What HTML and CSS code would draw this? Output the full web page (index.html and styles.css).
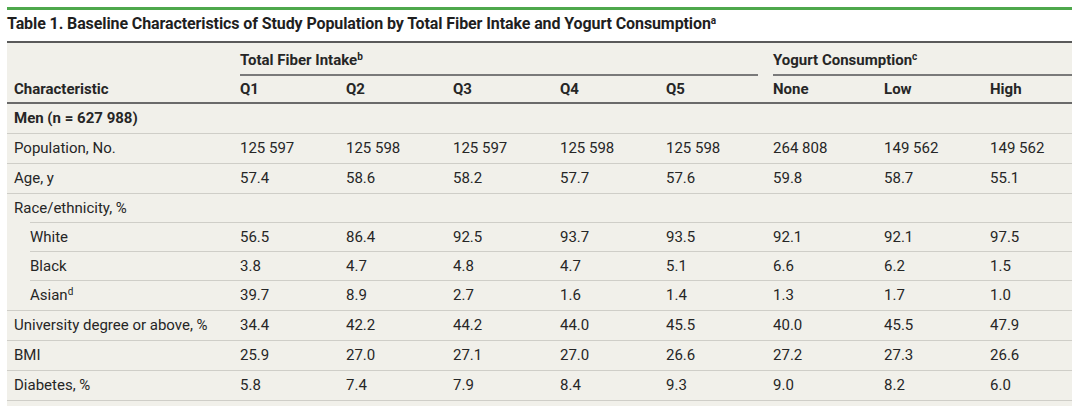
FILE: index.html
```html
<!DOCTYPE html>
<html lang="en">
<head>
<meta charset="utf-8">
<title>Table 1</title>
<link rel="stylesheet" href="styles.css">
</head>
<body>
<div class="wrap">
  <div class="topbar"></div>
  <div class="title">Table 1. Baseline Characteristics of Study Population by Total Fiber Intake and Yogurt Consumption<sup>a</sup></div>
  <table class="tbl">
    <colgroup>
      <col class="c0"><col class="c1"><col class="c2"><col class="c3"><col class="c4"><col class="c5"><col class="c6"><col class="c7"><col class="c8">
    </colgroup>
    <thead>
      <tr class="span-row">
        <th></th>
        <th colspan="5" class="spanner"><div class="span-label">Total Fiber Intake<sup>b</sup></div></th>
        <th colspan="3" class="spanner last"><div class="span-label">Yogurt Consumption<sup>c</sup></div></th>
      </tr>
      <tr class="col-row">
        <th>Characteristic</th>
        <th>Q1</th><th>Q2</th><th>Q3</th><th>Q4</th><th>Q5</th>
        <th>None</th><th>Low</th><th>High</th>
      </tr>
    </thead>
    <tbody>
      <tr class="group"><td colspan="9">Men (n = 627 988)</td></tr>
      <tr><td>Population, No.</td><td>125 597</td><td>125 598</td><td>125 597</td><td>125 598</td><td>125 598</td><td>264 808</td><td>149 562</td><td>149 562</td></tr>
      <tr><td>Age, y</td><td>57.4</td><td>58.6</td><td>58.2</td><td>57.7</td><td>57.6</td><td>59.8</td><td>58.7</td><td>55.1</td></tr>
      <tr class="parent"><td colspan="9">Race/ethnicity, %</td></tr>
      <tr class="sub"><td><span class="ind">White</span></td><td>56.5</td><td>86.4</td><td>92.5</td><td>93.7</td><td>93.5</td><td>92.1</td><td>92.1</td><td>97.5</td></tr>
      <tr class="sub"><td><span class="ind">Black</span></td><td>3.8</td><td>4.7</td><td>4.8</td><td>4.7</td><td>5.1</td><td>6.6</td><td>6.2</td><td>1.5</td></tr>
      <tr><td><span class="ind">Asian<sup>d</sup></span></td><td>39.7</td><td>8.9</td><td>2.7</td><td>1.6</td><td>1.4</td><td>1.3</td><td>1.7</td><td>1.0</td></tr>
      <tr><td>University degree or above, %</td><td>34.4</td><td>42.2</td><td>44.2</td><td>44.0</td><td>45.5</td><td>40.0</td><td>45.5</td><td>47.9</td></tr>
      <tr><td>BMI</td><td>25.9</td><td>27.0</td><td>27.1</td><td>27.0</td><td>26.6</td><td>27.2</td><td>27.3</td><td>26.6</td></tr>
      <tr><td>Diabetes, %</td><td>5.8</td><td>7.4</td><td>7.9</td><td>8.4</td><td>9.3</td><td>9.0</td><td>8.2</td><td>6.0</td></tr>
      <tr class="tail"><td colspan="9"></td></tr>
    </tbody>
  </table>
</div>
</body>
</html>
```
FILE: styles.css
```css
html, body {
  margin: 0;
  padding: 0;
  background: #ffffff;
}
body {
  font-family: Roboto, "Liberation Sans", sans-serif;
  color: #262626;
  height: 406px;
  overflow: hidden;
}
.wrap {
  margin: 7px 8px 0 7px;
}
.topbar {
  height: 3px;
  background: #4ea84c;
}
.title {
  font-weight: 700;
  font-size: 16px;
  line-height: 20px;
  padding: 4px 0 7px 0;
  letter-spacing: -0.1px;
  color: #1f1f1f;
}
.title sup {
  font-size: 10px;
  line-height: 0;
  vertical-align: 5px;
  font-weight: 700;
}
.tbl {
  width: 100%;
  border-collapse: collapse;
  table-layout: fixed;
  background: #f1f0ea;
  border-top: 2px solid #5a5a5a;
  font-size: 15px;
}
.c0 { width: 226px; }
.c1 { width: 106px; }
.c2 { width: 107px; }
.c3 { width: 107px; }
.c4 { width: 106px; }
.c5 { width: 107px; }
.c6 { width: 111px; }
.c7 { width: 106px; }
.c8 { width: auto; }
.tbl th {
  text-align: left;
  font-weight: 700;
  padding: 0 0 0 7px;
  line-height: 18px;
  white-space: nowrap;
}
.span-row th {
  height: 33px;
  vertical-align: bottom;
}
.spanner {
  padding-right: 8px !important;
}
.spanner.last {
  padding-right: 0 !important;
}
.span-label {
  border-bottom: 2px solid #7a7a7a;
  padding-bottom: 5px;
}
.tbl sup {
  font-size: 10px;
  line-height: 0;
  vertical-align: 5px;
}
.col-row th {
  height: 26px;
  border-bottom: 2px solid #6a6a6a;
  vertical-align: middle;
  padding-bottom: 0;
}
.tbl td {
  padding: 0 0 2px 7px;
  height: 27px;
  line-height: 18px;
  border-bottom: 1px solid #cfcec8;
  white-space: nowrap;
  vertical-align: middle;
}
.group td {
  font-weight: 700;
}
.ind {
  padding-left: 16px;
}
.parent td, .sub td {
  border-bottom: none;
}
.parent td, .sub td {
  background-image: linear-gradient(#cfcec8, #cfcec8);
  background-size: 100% 1px;
  background-position: bottom left;
  background-repeat: no-repeat;
}
.parent td:first-child, .sub td:first-child {
  background-size: calc(100% - 23px) 1px;
  background-position: bottom right;
}
.tail td {
  border-bottom: none;
  height: 8px;
}
```
